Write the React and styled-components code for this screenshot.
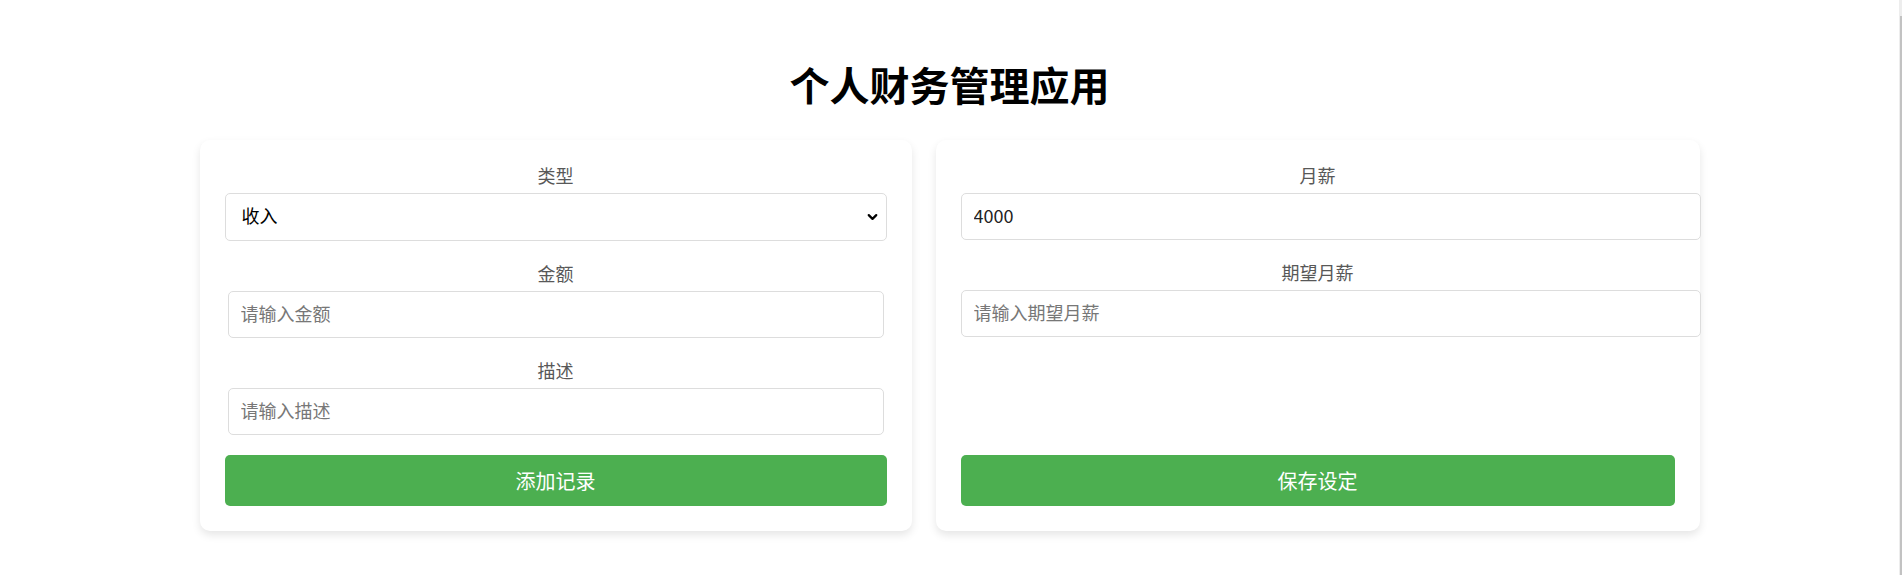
import React, { useState } from 'react'
import styled, { createGlobalStyle } from 'styled-components'
import { ChevronDown } from 'lucide-react'

const GlobalStyle = createGlobalStyle`
  html, body {
    margin: 0;
    padding: 0;
    background: #fff;
  }
  body {
    font-family: 'Noto Sans CJK SC', 'Liberation Sans', sans-serif;
    color: #333;
  }
`

const Page = styled.div`
  width: calc(100% - 3px);
  padding-top: 60px;
  padding-bottom: 40px;
`

const Title = styled.h1`
  margin: 0 0 32px;
  text-align: center;
  font-size: 40px;
  line-height: 48px;
  font-weight: 700;
  color: #000;
`

const Columns = styled.div`
  width: 1500px;
  margin: 0 auto;
  display: flex;
  gap: 24px;
  align-items: stretch;
`

const Card = styled.div`
  flex: 0 0 ${({ $w }) => $w}px;
  box-sizing: border-box;
  display: flex;
  flex-direction: column;
  background: #fff;
  border-radius: 10px;
  padding: 23px 25px 25px;
  box-shadow: 0 4px 8px rgba(0, 0, 0, 0.1);
`

const Field = styled.div`
  margin-bottom: 20px;
  text-align: center;
`

const Label = styled.label`
  display: block;
  margin-bottom: 6px;
  font-size: 18px;
  line-height: 24px;
  color: #585858;
`

const SelectWrap = styled.div`
  position: relative;
`

const Select = styled.select`
  display: block;
  width: 100%;
  height: 48px;
  box-sizing: border-box;
  padding: 0 40px 4px 16px;
  border: 1px solid #ddd;
  border-radius: 5px;
  background: #fff;
  font-family: inherit;
  font-size: 18px;
  color: #000;
  appearance: none;
  outline: none;
`

const Arrow = styled(ChevronDown)`
  position: absolute;
  right: 7px;
  top: 50%;
  transform: translateY(-50%);
  pointer-events: none;
  color: #000;
`

const Input = styled.input`
  display: block;
  box-sizing: border-box;
  height: 47px;
  width: ${({ $wide }) => ($wide ? 'calc(100% + 26px)' : 'calc(100% - 6px)')};
  margin: ${({ $wide }) => ($wide ? '0' : '0 3px')};
  padding: 0 12px 4px;
  border: 1px solid #ddd;
  border-radius: 5px;
  background: #fff;
  font-family: inherit;
  font-size: 18px;
  color: #222;
  outline: none;

  &::placeholder {
    color: #777;
  }
`

const Button = styled.button`
  margin-top: auto;
  width: 100%;
  height: 51px;
  border: none;
  border-radius: 5px;
  background: #4caf50;
  color: #fff;
  font-family: inherit;
  font-size: 20px;
  cursor: pointer;
`

const ScrollTrack = styled.div`
  position: fixed;
  top: 0;
  right: 0;
  width: 3px;
  height: 100%;
  background: #ededed;

  &::after {
    content: '';
    position: absolute;
    top: 16px;
    bottom: 0;
    left: 1px;
    right: 0;
    background: #c2c2c2;
  }
`

export default function App() {
  const [type, setType] = useState('income')
  const [salary, setSalary] = useState('4000')

  return (
    <Page>
      <GlobalStyle />
      <Title>个人财务管理应用</Title>
      <Columns>
        <Card $w={712}>
          <Field>
            <Label>类型</Label>
            <SelectWrap>
              <Select value={type} onChange={(e) => setType(e.target.value)}>
                <option value="income">收入</option>
                <option value="expense">支出</option>
              </Select>
              <Arrow size={15} strokeWidth={3.6} />
            </SelectWrap>
          </Field>
          <Field>
            <Label>金额</Label>
            <Input type="number" placeholder="请输入金额" />
          </Field>
          <Field>
            <Label>描述</Label>
            <Input type="text" placeholder="请输入描述" />
          </Field>
          <Button>添加记录</Button>
        </Card>
        <Card $w={764}>
          <Field>
            <Label>月薪</Label>
            <Input $wide value={salary} onChange={(e) => setSalary(e.target.value)} />
          </Field>
          <Field>
            <Label>期望月薪</Label>
            <Input $wide placeholder="请输入期望月薪" />
          </Field>
          <Button>保存设定</Button>
        </Card>
      </Columns>
      <ScrollTrack />
    </Page>
  )
}
